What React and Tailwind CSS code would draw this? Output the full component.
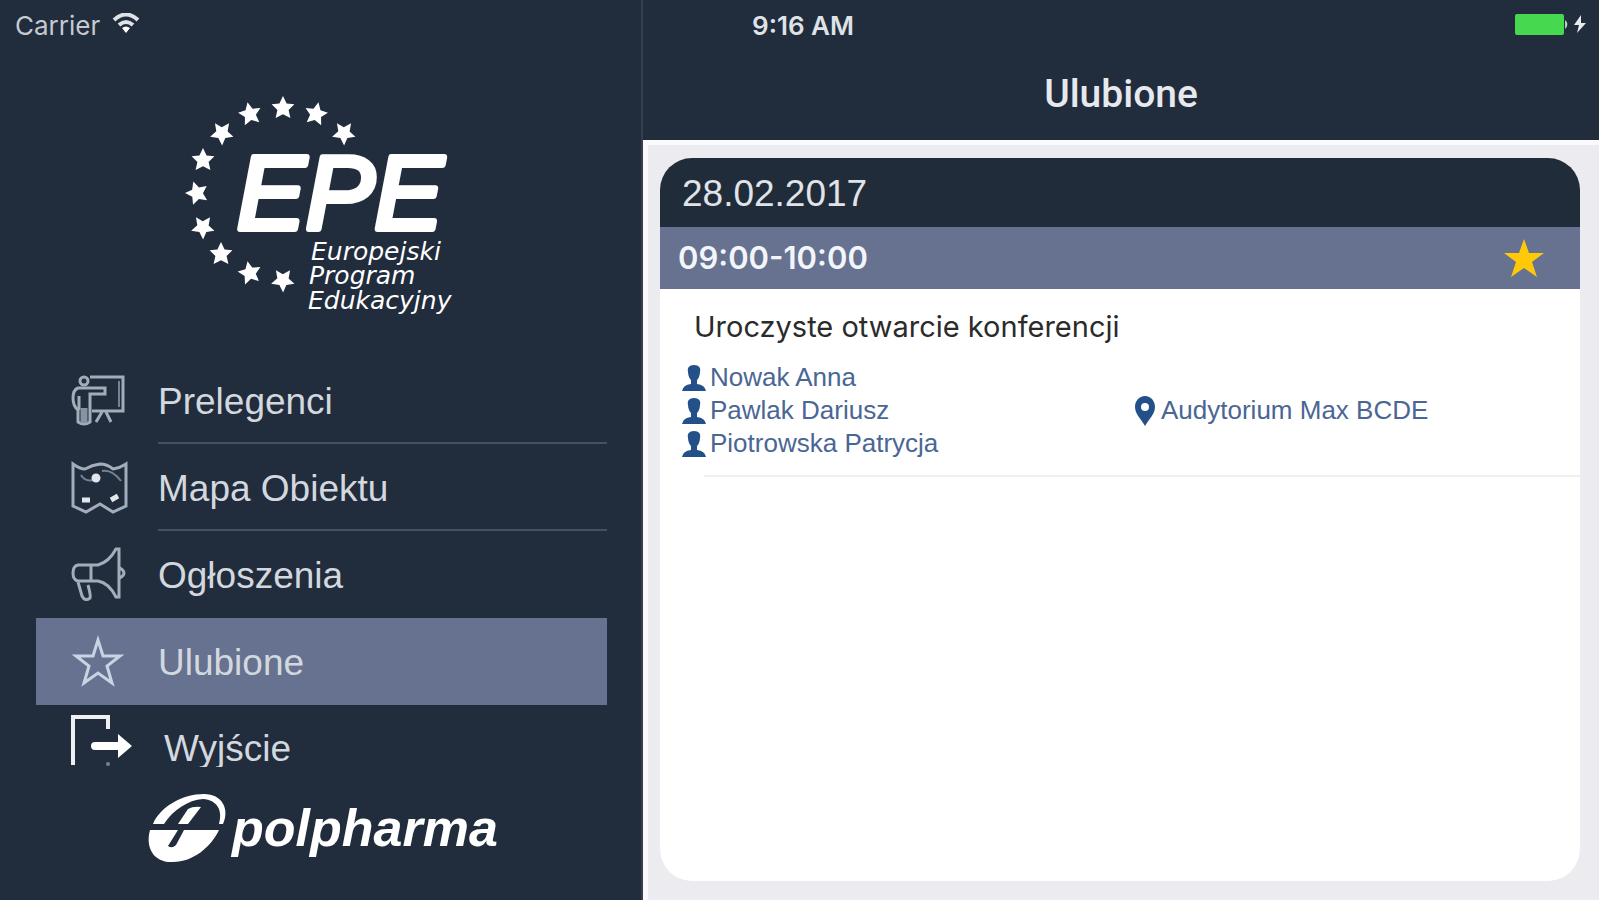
const LOGO_STARS = [
  [345, 133, 36],
  [317, 114, 12],
  [284, 108, 0],
  [251, 114, -12],
  [223, 133, 36],
  [204, 160, 0],
  [198, 193, -18],
  [204, 227, 36],
  [222, 254, 0],
  [251, 273, 60],
  [284, 280, 36],
];

const STAR = "M0 -12 L3.6 -4.6 L11.4 -3.7 L5.6 2 L7.4 10 L0 6.2 L-7.4 10 L-5.6 2 L-11.4 -3.7 L-3.6 -4.6 Z";

function EpeLogo() {
  return (
    <svg viewBox="184 94 276 228" className="h-[228px] w-[276px] fill-white" role="img" aria-label="EPE">
      {LOGO_STARS.map(([x, y, r]) => (
        <path key={`${x}-${y}`} d={STAR} transform={`translate(${x} ${y}) rotate(${r})`} />
      ))}
      <text x="238" y="229" fontFamily="Liberation Sans, sans-serif" fontSize="103" fontStyle="italic" fontWeight="400" stroke="white" strokeWidth="6" strokeLinejoin="round">
        EPE
      </text>
      <g fontFamily="DejaVu Sans, sans-serif" fontSize="25" fontStyle="italic">
        <text x="312" y="260">Europejski</text>
        <text x="310" y="284">Program</text>
        <text x="309" y="309">Edukacyjny</text>
      </g>
    </svg>
  );
}

function PolpharmaLogo() {
  return (
    <svg viewBox="144 790 354 76" className="h-[76px] w-[354px] fill-white" role="img" aria-label="polpharma">
      <path d="M153 823 C160 806 182 793 204 793 C222 793 230 808 223 823 L219 823 C223 809 217 799 203 798 C188 799 173 809 164 823 Z" />
      <path d="M178 823 L188 808 Q193 805 201 806 L188 823 Z" />
      <path d="M150 829 L178 829 L168 845 Q172 848 176 844 L184 829 L219 829 C211 846 193 861 173 861 C154 862 145 847 150 829 Z" />
      <text x="232" y="845" fontFamily="Liberation Sans, sans-serif" fontSize="52" fontStyle="italic" fontWeight="700">
        polpharma
      </text>
    </svg>
  );
}

function SpeakerIcon() {
  return (
    <svg viewBox="0 0 60 60" className="size-[60px] fill-none stroke-[#a3adba] stroke-3">
      <path d="M20 6 H53 V40 H22" />
      <path d="M49 10 V36" className="stroke-2 stroke-[#768293]" />
      <circle cx="14" cy="10" r="4" />
      <path d="M8 17 H35 V23 H20 V51 Q14 55 8 51 V39 Q3 35 3 27 Q3 19 8 17 Z M9 25 V39 M32 41 L26 51 M36 41 L41 51" />
      <path d="M14 37 V52" className="stroke-[7px] stroke-[#8793a2]" />
    </svg>
  );
}

function MapIcon() {
  return (
    <svg viewBox="0 0 60 60" className="size-[60px] fill-none stroke-[#a3adba] stroke-3">
      <path d="M3 6 Q10 11 15 11 Q22 7 30 6 Q37 6 43 11 Q50 10 56 6 V48 L43 54 L30 46 L16 54 L3 48 Z" />
      <path d="M11 17 Q15 24 24 22 M32 13 Q42 11 51 23" className="stroke-2 stroke-[#768293]" />
      <circle cx="26" cy="20" r="3" className="fill-[#e3e7ec] stroke-[#e3e7ec]" />
      <path d="M12 42 H20 M41 42 L48 38" className="stroke-[#e3e7ec] stroke-[5px]" />
    </svg>
  );
}

function MegaphoneIcon() {
  return (
    <svg viewBox="0 0 60 60" className="size-[60px] fill-none stroke-[#a3adba] stroke-3">
      <path d="M8 20 H28 Q39 17 46 4 H49 V52 H46 Q39 38 28 36 H8 Q3 35 3 28 Q3 21 8 20 Z M21 20 V36 M50 23 Q58 28 50 33" />
      <path d="M8 37 L12 51 Q15 57 20 53 Q21 51 18 40" />
    </svg>
  );
}

function StarIcon() {
  return (
    <svg viewBox="0 0 60 60" className="size-[60px] fill-none stroke-[#c9d3e4] stroke-3">
      <path d="M28 8 L33 24 L50 24 L37 34 L42 51 L28 41 L14 51 L19 34 L6 24 L23 24 Z" />
    </svg>
  );
}

function ExitIcon() {
  return (
    <svg viewBox="0 0 62 60" className="h-[60px] w-[62px] fill-none stroke-[#eef0f2] stroke-[4px]">
      <path d="M3 52 V4 H38 V16" />
      <circle cx="38" cy="51" r="1" className="stroke-2 stroke-[#768293]" />
      <path d="M25 33 H48" strokeLinecap="round" className="stroke-white stroke-[8px]" />
      <path d="M48 21 L62 33 L48 45 Z" className="fill-white stroke-none" />
    </svg>
  );
}

const MENU = [
  { label: "Prelegenci", icon: <SpeakerIcon />, line: true },
  { label: "Mapa Obiektu", icon: <MapIcon />, line: true },
  { label: "Ogłoszenia", icon: <MegaphoneIcon /> },
  { label: "Ulubione", icon: <StarIcon />, active: true },
];

const SPEAKERS = ["Nowak Anna", "Pawlak Dariusz", "Piotrowska Patrycja"];

function Sidebar() {
  return (
    <aside className="flex flex-col border-r-2 border-[#344050]">
      <div className="flex h-[50px] items-center gap-3 pl-[15px] font-['Inter',sans-serif] text-[26px] text-[#c5cad1]">
        Carrier
        <svg viewBox="0 0 28 24" className="h-6 w-7 fill-none stroke-[#dfe2e6] stroke-[4px]" aria-hidden="true">
          <path d="M2 7 Q14 -4 26 7 M7 12 Q14 6 21 12" />
          <path d="M10 15 Q14 12 18 15 L14 20 Z" className="fill-white stroke-none" />
        </svg>
      </div>
      <div className="flex justify-center pt-11">
        <EpeLogo />
      </div>
      <nav className="mt-[35px] pr-[34px] pl-9">
        <ul>
          {MENU.map((item) => (
            <li key={item.label} className={item.active ? "bg-[#66728f]" : ""}>
              <a href="#" className="flex h-[87px] items-center pl-[34px]">
                {item.icon}
                <span
                  className={
                    item.line
                      ? "ml-7 flex h-full grow items-center border-b-2 border-[#465160] pt-1 text-[37px] text-[#d3d8df]"
                      : "ml-7 flex h-full grow items-center pt-[2px] text-[37px] text-[#d3d8df]"
                  }
                >
                  {item.label}
                </span>
              </a>
            </li>
          ))}
          <li className="h-[62px] overflow-hidden">
            <a href="#" className="flex h-[87px] items-center pl-[34px] text-[37px] text-[#d3d8df]">
              <span className="self-start pt-2">
                <ExitIcon />
              </span>
              <span className="ml-8">Wyjście</span>
            </a>
          </li>
        </ul>
      </nav>
      <div className="flex justify-center pt-6">
        <PolpharmaLogo />
      </div>
    </aside>
  );
}

export default function App() {
  return (
    <div className="grid min-h-screen grid-cols-[643fr_956fr] bg-[#212c3c] font-['Liberation_Sans',sans-serif]">
      <Sidebar />
      <main className="flex flex-col">
        <header className="h-[140px]">
          <div className="flex h-[50px] items-center justify-between pr-3 pl-[109px] font-['Inter',sans-serif]">
            <time className="text-[26px] font-semibold text-[#dfe2e6]">9:16 AM</time>
            <svg viewBox="0 0 74 24" className="h-6 w-[74px]" aria-hidden="true">
              <rect x="2" y="1" width="49" height="21" rx="2" fill="#46d94f" />
              <path d="M52 7 Q57 11 52 16 Z" fill="#a8d8b0" />
              <path d="M68 2 L61 12 H66 L64 20 L73 10 H68 Z" fill="#e8ebee" />
            </svg>
          </div>
          <h1 className="pt-4 text-center font-['Roboto',sans-serif] text-[39px] leading-[56px] font-medium text-[#e6e9ee]">Ulubione</h1>
        </header>
        <div className="flex grow flex-col border-t-[5px] border-l-[5px] border-[#fafafd] bg-[#ebebf0] pt-[13px] pr-[19px] pb-[19px] pl-3">
          <section className="grow overflow-hidden rounded-[32px] bg-white">
            <h2 className="flex h-[69px] items-center bg-[#212c3a] pt-[2px] pl-[22px] text-[37px] text-[#e0e4e9]">28.02.2017</h2>
            <div className="flex h-[62px] items-center justify-between bg-[#66728f] pr-9 pl-[18px]">
              <time className="font-['Inter',sans-serif] text-[31px] font-semibold text-[#f2f5f9]">09:00-10:00</time>
              <button aria-label="Ulubione">
                <svg viewBox="0 0 40 40" className="size-10 fill-[#ffc90a]">
                  <path d="M20 1 L25 15 L40 15 L28 24 L33 39 L20 30 L7 39 L12 24 L0 15 L15 15 Z" />
                </svg>
              </button>
            </div>
            <article>
              <h3 className="pt-5 pl-[34px] font-['Inter',sans-serif] text-[29px] leading-9 text-[#2b2b2b]">
                Uroczyste otwarcie konferencji
              </h3>
              <div className="grid grid-cols-2 items-center pt-4 pl-[22px] text-[26px] leading-[33px] text-[#4a6694]">
                <ul>
                  {SPEAKERS.map((name) => (
                    <li key={name} className="flex items-center gap-1">
                      <svg viewBox="0 0 24 28" className="h-7 w-6 fill-[#24508a]" aria-hidden="true">
                        <path d="M12 1 C17 1 19 4 18 8 C18 12 16 15 15 16 V20 Q23 21 24 27 H0 Q1 21 9 20 V16 C8 15 6 12 6 8 C5 4 7 1 12 1 Z" />
                      </svg>
                      {name}
                    </li>
                  ))}
                </ul>
                <p className="flex items-center gap-1 pl-[2px]">
                  <svg viewBox="0 0 24 32" className="h-8 w-6 fill-[#24508a]" aria-hidden="true">
                    <path fillRule="evenodd" d="M12 1 C18 1 22 6 22 12 C22 19 16 24 12 31 C8 24 2 19 2 12 C2 6 6 1 12 1 Z M12 8 A4 4 0 1 0 12 16 A4 4 0 1 0 12 8 Z" />
                  </svg>
                  Audytorium Max BCDE
                </p>
              </div>
              <hr className="mt-[15px] ml-11 border-t-2 border-[#f0f0f0]" />
            </article>
          </section>
        </div>
      </main>
    </div>
  );
}
